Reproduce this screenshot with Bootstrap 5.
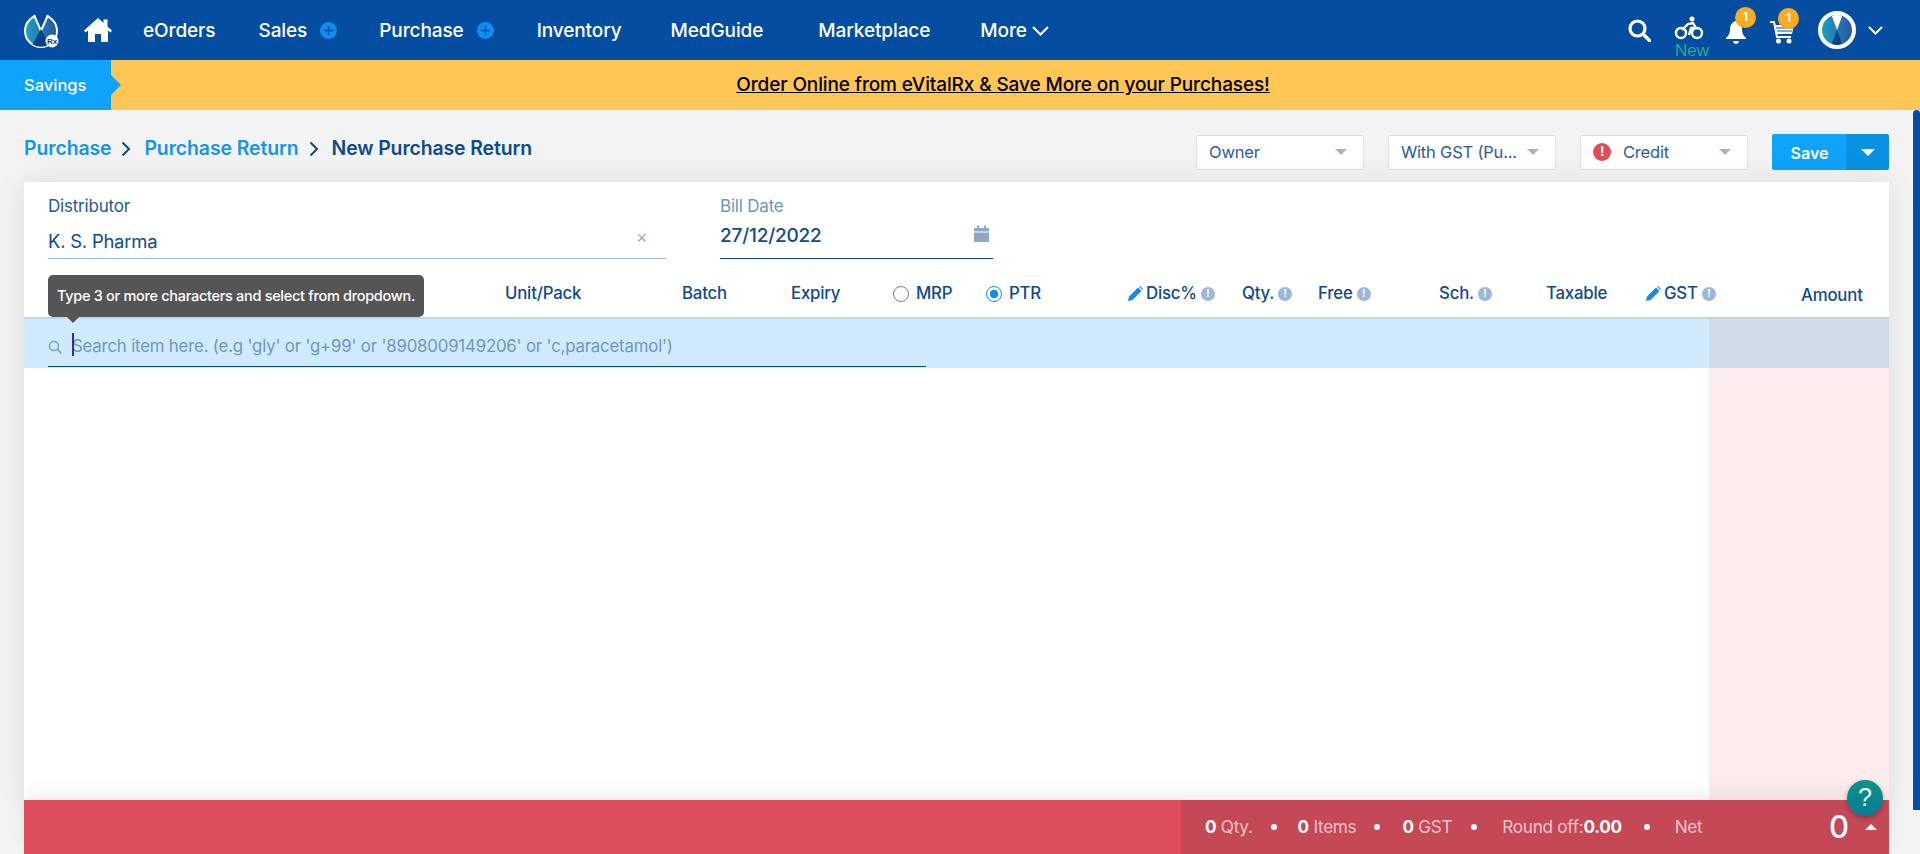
<!DOCTYPE html>
<html lang="en"><head><meta charset="utf-8"><title>New Purchase Return</title>
<link href="https://cdn.jsdelivr.net/npm/bootstrap@5.3.0/dist/css/bootstrap.min.css" rel="stylesheet">
<style>
html,body{height:854px;overflow:hidden}
body{font-family:Inter,"Liberation Sans",sans-serif;background:#f3f3f3;color:#0f4a8c;display:flex;flex-direction:column}
.topbar{height:60px;background:#054da0;color:#fff;padding:0;flex:none;flex-wrap:nowrap;justify-content:flex-start}
.logo-box{margin-left:24px;width:36px;height:36px;margin-right:24px;display:block}
.home-ico{width:28px;height:26px;margin-right:31px}
.nav-txt{font-size:19px;font-weight:500;color:#fff;text-decoration:none;white-space:nowrap;letter-spacing:-.1px;padding-top:2px}
.plus-dot{width:17px;height:17px;border-radius:50%;background:#0f8df0;display:inline-flex;align-items:center;justify-content:center;margin-left:13px}
.ico-slot{position:relative;display:block}
.count-dot{position:absolute;width:21px;height:21px;border-radius:50%;background:#f9ab25;color:#fff;font-size:12px;font-weight:600;display:flex;align-items:center;justify-content:center}
.new-tag{position:absolute;left:1px;right:-5px;top:28px;text-align:center;font-size:17px;line-height:16px;color:#2aa79b;font-family:"Liberation Sans",sans-serif}
.saving-row{height:50px;background:#fec755;flex:none;position:relative;display:flex;align-items:center;justify-content:center}
.saving-tag{position:absolute;left:0;top:0;bottom:0;width:111px;background:#0fa3fb;color:#fff;font-size:16.5px;font-weight:500;display:flex;align-items:center;padding-left:24px}
.saving-tag::after{content:"";position:absolute;left:111px;top:15px;border-left:10px solid #0fa3fb;border-top:10px solid transparent;border-bottom:10px solid transparent}
.saving-link{color:#000;font-size:19px;font-weight:500;text-decoration:underline;letter-spacing:-.12px;padding-left:86px}
.page-wrap{flex:1;min-height:0;display:flex}
.page-col{flex:1;min-width:0;padding:0 24px 0 24px;display:flex;flex-direction:column;width:1889px}
.scroll-thumb{width:7px;background:#054da0;border-radius:4px 4px 0 0;height:700px;flex:none}
.title-row{height:72px;flex:none;position:relative;padding-top:24px}
.crumb-a{font-size:19.4px;font-weight:600;color:#1596e8;white-space:nowrap;letter-spacing:-.08px}
.crumb-b{font-size:19.4px;font-weight:600;color:#0f4a8c;white-space:nowrap;letter-spacing:-.1px}
.crumb-sep{margin:0 13px 0 10px}
.crumb-line{height:29px}
.pick-box{width:168px;height:35px;background:#fff;border:1px solid #dbe1e8;border-radius:3px;font-size:16.5px;color:#2a5c9c;display:flex;align-items:center;padding:0 16px 0 12px;white-space:nowrap;letter-spacing:-.2px}
.tri-down{width:0;height:0;border-top:6px solid #9fb3cb;border-left:6px solid transparent;border-right:6px solid transparent;margin-left:auto;flex:none}
.alert-dot{width:18px;height:18px;border-radius:50%;background:#e04b5a;color:#fff;font-size:13px;font-weight:700;display:inline-flex;align-items:center;justify-content:center;margin-right:12px;flex:none}
.save-main{background:#0fa3fb;color:#fff;font-size:16px;font-weight:600;width:75px;height:36px;padding:1px 0 0;border:0;border-radius:2px 0 0 2px}
.save-caret{background:#0b91e2;width:43px;height:36px;padding:0;border:0;border-radius:0 2px 2px 0;display:flex;align-items:center;justify-content:center}
.save-caret i{display:block;width:0;border-top:7px solid #fff;border-left:7px solid transparent;border-right:7px solid transparent}
.sheet{flex:1;min-height:0;background:#fff;box-shadow:0 0 28px rgba(0,0,0,.09);display:flex;flex-direction:column;position:relative;width:1865px}
.form-row{height:77px;flex:none;padding:14px 24px 0;display:flex;gap:54px}
.f-party{width:618px;height:63px;border-bottom:1px solid #9db7d8;position:relative}
.f-date{width:273px;height:63px;border-bottom:1px solid #0f4a8c;position:relative}
.f-lab{font-size:17px;line-height:20px;color:#1f5a9e;letter-spacing:-.2px}
.f-lab-soft{color:#6f93bf}
.f-val{font-size:18.4px;line-height:24px;color:#0f4a8c;margin-top:13px;letter-spacing:-.2px}
.f-val-date{font-weight:500;margin-top:8px;font-size:19px}
.x-mark{position:absolute;right:19px;top:32px;color:#8ea7c7;font-size:18px;line-height:20px;font-family:"Liberation Sans",sans-serif}
.cal-ico{position:absolute;right:3px;top:29px}
.head-grid{height:60px;flex:none;padding:0 0 0 24px;display:grid;grid-template-columns:457px 177px 109px 102px 93px 142px 114px 76px 121px 107px 100px 155px 64px;align-items:center;font-size:16.8px;font-weight:500;color:#0f4a8c;border-bottom:2px solid #c9d4e0;letter-spacing:-.2px;white-space:nowrap;padding-top:11px}
.head-cell{display:flex;align-items:center}
.amt-cell{padding-top:5px}
.i-dot{width:14px;height:14px;border-radius:50%;background:#9db7d8;color:#fff;font-size:10px;font-weight:700;display:inline-flex;align-items:center;justify-content:center;margin-left:4px}
.pen{margin-right:3px;flex:none}
.rd{width:16px!important;height:16px;margin:0 7px 0 0!important;border:1px solid #6b7d90;flex:none}
.rd:checked{background-color:#fff;background-image:radial-gradient(circle,#0f8df0 0 4px,#fff 4.500px);border-color:#0f8df0}
.search-row{height:49px;flex:none;display:flex}
.search-left{flex:1;background:#cfeafd;padding:0 0 0 24px}
.search-right{width:180px;background:#d0dcea}
.search-line{width:878px;height:48px;border-bottom:1px solid #0a4a7a;display:flex;align-items:center;position:relative;font-size:16.8px;color:#6f96c0;letter-spacing:-.18px;padding-top:8px}
.search-line svg{margin-right:10px;flex:none}
.blink{position:absolute;left:24px;top:14px;width:1.5px;height:23px;background:#3a2c9c}
.body-row{flex:1;display:flex;min-height:0}
.body-left{flex:1}
.body-right{width:180px;background:#fcecec}
.tip-box{position:absolute;left:24px;top:93px;width:376px;height:42px;background:#555;border-radius:5px;color:#fff;font-size:14.500px;font-weight:500;display:flex;align-items:center;justify-content:center;letter-spacing:-.3px;white-space:nowrap;z-index:3}
.tip-box::after{content:"";position:absolute;left:19px;top:42px;border-top:6px solid #555;border-left:6px solid transparent;border-right:6px solid transparent}
.foot-bar{height:54px;flex:none;background:#de4d5c;display:flex;justify-content:flex-end;box-shadow:0 -8px 18px rgba(0,0,0,.06);position:relative;width:1865px}
.foot-sum{width:708px;background:#c54856;display:flex;align-items:center;color:#f5c3c8;font-size:17.2px;position:relative;padding-left:24px;letter-spacing:-.3px;white-space:nowrap}
.foot-sum b{color:#fff;font-weight:700}
.f-dot{width:6px;height:6px;border-radius:50%;background:#fff;flex:none}
.f-total{position:absolute;left:648px;top:9px;color:#fff;font-size:31px;line-height:36px;font-weight:500}
.f-up{position:absolute;left:684px;top:24px;border-bottom:6px solid #fff;border-left:6px solid transparent;border-right:6px solid transparent}
.help-fab{position:absolute;left:1823px;top:-20px;width:36px;height:36px;border-radius:50%;background:linear-gradient(180deg,#0d9488,#05858f 60%,#0a7d9a);color:#fff;font-size:25px;font-weight:400;display:flex;align-items:center;justify-content:center;box-shadow:0 2px 5px rgba(0,0,0,.3);font-family:"Liberation Sans",sans-serif}
.gap-a{margin-left:43px}.gap-b{margin-left:42px}.gap-c{margin-left:43px}.gap-d{margin-left:49px}.gap-e{margin-left:55px}.gap-f{margin-left:50px}
.chev-more{margin-left:5px;margin-top:2px}
.dm-a{margin:0 21px 0 18px}.dm-b{margin:0 22px 0 18px}.dm-c{margin:0 25px 0 19px}.dm-d{margin:0 25px 0 22px}
.ctl-row{width:693px;gap:24px}
.nav-right-bike{width:30px;height:25px;margin-left:23px;margin-top:-6px}
.nav-right-bell{width:20px;height:23px;margin-left:22px}
.nav-right-cart{width:25px;height:23px;margin-left:23px}
.avatar-ico{margin-left:24px}
.chev-end{margin:0 37px 0 12px}
</style></head>
<body>
<nav class="navbar topbar d-flex align-items-center">
  <svg class="logo-box" viewBox="0 0 36 36"><defs><linearGradient id="lg1" x1="0" x2="1"><stop offset="0" stop-color="#1fa3c4"/><stop offset="1" stop-color="#2c4f9e"/></linearGradient></defs>
    <circle cx="17" cy="19" r="16" fill="url(#lg1)" stroke="#fff" stroke-width="2"/>
    <path d="M17 19L10 0H24Z" fill="#054da0"/><path d="M10 3L17 19L24 3" fill="none" stroke="#fff" stroke-width="2"/>
    <path d="M17 17L8.500 32.500Q17 37 25.500 32.500Z" fill="#0a3f8f"/>
    <circle cx="28" cy="29" r="6.500" fill="#fff"/><text x="28" y="32" font-size="8" font-weight="700" text-anchor="middle" fill="#0a3f8f" font-family="Liberation Sans">Rx</text></svg>
  <svg class="home-ico" viewBox="0 0 28 26"><path fill="#fff" d="M14 1L0 13.500 1.500 15.500 4 13.500V25H11V17H17V25H24V13.500L26.500 15.500 28 13.500 23.500 9.500V2.500H19.500V6Z"/></svg>
  <a class="nav-txt" href="#">eOrders</a>
  <a class="nav-txt gap-a" href="#">Sales</a><span class="plus-dot"><svg width="9" height="9" viewBox="0 0 9 9"><path d="M4.500 0V9M0 4.500H9" stroke="#054da0" stroke-width="1.400"/></svg></span>
  <a class="nav-txt gap-b" href="#">Purchase</a><span class="plus-dot"><svg width="9" height="9" viewBox="0 0 9 9"><path d="M4.500 0V9M0 4.500H9" stroke="#054da0" stroke-width="1.400"/></svg></span>
  <a class="nav-txt gap-c" href="#">Inventory</a>
  <a class="nav-txt gap-d" href="#">MedGuide</a>
  <a class="nav-txt gap-e" href="#">Marketplace</a>
  <a class="nav-txt gap-f" href="#">More</a>
  <svg class="chev-more" width="17" height="10" viewBox="0 0 17 10"><path d="M1 1L8.500 8.500 16 1" fill="none" stroke="#fff" stroke-width="2.200"/></svg>
  <div class="ms-auto d-flex align-items-center">
    <svg width="23" height="23" viewBox="0 0 23 23"><circle cx="9.500" cy="9.500" r="7.500" fill="none" stroke="#fff" stroke-width="3.200"/><path d="M15 15L21.500 21.500" stroke="#fff" stroke-width="3.400" stroke-linecap="round"/></svg>
    <span class="ico-slot nav-right-bike"><svg width="30" height="24" viewBox="0 0 30 24"><circle cx="7" cy="17" r="5" fill="none" stroke="#fff" stroke-width="2.400"/><circle cx="23" cy="17" r="5" fill="none" stroke="#fff" stroke-width="2.400"/><circle cx="18" cy="3" r="2.500" fill="#fff"/><path d="M8 14L14 8 19 7 22 12 17 12 15 19" fill="none" stroke="#fff" stroke-width="2.400"/></svg><span class="new-tag">New</span></span>
    <span class="ico-slot nav-right-bell"><svg width="20" height="23" viewBox="0 0 20 23"><path fill="#fff" d="M10 0C6 1 4 4 4 8C4 12 3 14 0 17V18H20V17C17 14 16 12 16 8C16 4 14 1 10 0ZM7 20H13C13 22 11 23 10 23S7 22 7 20Z"/></svg><span class="count-dot" style="left:9px;top:-12px">1</span></span>
    <span class="ico-slot nav-right-cart"><svg width="25" height="23" viewBox="0 0 25 23"><path d="M1 1H5L8 16H22" fill="none" stroke="#fff" stroke-width="2"/><path fill="#fff" d="M6 4H25L23 13H8Z"/><path d="M7 7H24M8 10H23" stroke="#054da0" stroke-width="1"/><circle cx="9.500" cy="20" r="2.500" fill="#fff"/><circle cx="20" cy="20" r="2.500" fill="#fff"/></svg><span class="count-dot" style="left:9px;top:-11px">1</span></span>
    <svg class="avatar-ico" width="38" height="38" viewBox="0 0 38 38"><defs><linearGradient id="lg2" x1="0" x2="1"><stop offset="0" stop-color="#18a6c4"/><stop offset="1" stop-color="#2f4fa0"/></linearGradient><clipPath id="cc"><circle cx="19" cy="19" r="15"/></clipPath></defs><circle cx="19" cy="19" r="17" fill="url(#lg2)" stroke="#fff" stroke-width="4"/><g clip-path="url(#cc)"><path d="M12 0H26L19 19Z" fill="#fff"/><path d="M12 38H26L19 19Z" fill="#0a3f8f"/></g></svg>
    <svg class="chev-end" width="15" height="9" viewBox="0 0 15 9"><path d="M1 1L7.500 7.500 14 1" fill="none" stroke="#fff" stroke-width="2"/></svg>
  </div>
</nav>
<div class="saving-row"><div class="saving-tag">Savings</div><a class="saving-link" href="#">Order Online from eVitalRx &amp; Save More on your Purchases!</a></div>
<div class="page-wrap">
  <div class="page-col">
    <div class="title-row d-flex align-items-start justify-content-between">
      <div class="d-flex align-items-center crumb-line">
        <a class="crumb-a text-decoration-none" href="#">Purchase</a>
        <svg class="crumb-sep" width="10" height="16" viewBox="0 0 10 16"><path d="M1.500 1.500L8 8 1.500 14.500" fill="none" stroke="#0f4a8c" stroke-width="2"/></svg>
        <a class="crumb-a text-decoration-none" href="#">Purchase Return</a>
        <svg class="crumb-sep" width="10" height="16" viewBox="0 0 10 16"><path d="M1.500 1.500L8 8 1.500 14.500" fill="none" stroke="#0f4a8c" stroke-width="2"/></svg>
        <span class="crumb-b">New Purchase Return</span>
      </div>
      <div class="d-flex align-items-center ctl-row">
        <div class="pick-box">Owner<span class="tri-down"></span></div>
        <div class="pick-box">With GST (Pu...<span class="tri-down"></span></div>
        <div class="pick-box"><span class="alert-dot">!</span>Credit<span class="tri-down"></span></div>
        <div class="btn-group"><button class="btn save-main" type="button">Save</button><button class="btn save-caret" type="button" aria-label="More"><i></i></button></div>
      </div>
    </div>
    <div class="sheet">
      <div class="form-row">
        <div class="f-party"><div class="f-lab">Distributor</div><div class="f-val">K. S. Pharma</div><span class="x-mark">×</span></div>
        <div class="f-date"><div class="f-lab f-lab-soft">Bill Date</div><div class="f-val f-val-date">27/12/2022</div>
          <svg class="cal-ico" width="17" height="18" viewBox="0 0 17 18"><path fill="#8ea7c7" d="M1 3H4V0.500H6V3H11V0.500H13V3H16V17H1Z"/><path stroke="#fff" stroke-width="1" d="M1 7H16"/></svg></div>
      </div>
      <div class="head-grid">
        <div class="head-cell"></div>
        <div class="head-cell">Unit/Pack</div>
        <div class="head-cell">Batch</div>
        <div class="head-cell">Expiry</div>
        <label class="head-cell"><input class="form-check-input rd" type="radio" name="pr">MRP</label>
        <label class="head-cell"><input class="form-check-input rd" type="radio" name="pr" checked>PTR</label>
        <div class="head-cell"><svg class="pen" width="15" height="15" viewBox="0 0 15 15"><path fill="#0f8df0" d="M0 15L1 10.500 10 1.500 13.500 5 4.500 14ZM11 .5L12 0 15 3 14.500 4Z"/></svg>Disc%<span class="i-dot">!</span></div>
        <div class="head-cell">Qty.<span class="i-dot">!</span></div>
        <div class="head-cell">Free<span class="i-dot">!</span></div>
        <div class="head-cell">Sch.<span class="i-dot">!</span></div>
        <div class="head-cell">Taxable</div>
        <div class="head-cell"><svg class="pen" width="15" height="15" viewBox="0 0 15 15"><path fill="#0f8df0" d="M0 15L1 10.500 10 1.500 13.500 5 4.500 14ZM11 .5L12 0 15 3 14.500 4Z"/></svg>GST<span class="i-dot">!</span></div>
        <div class="head-cell amt-cell">Amount</div>
      </div>
      <div class="search-row">
        <div class="search-left"><div class="search-line"><svg width="14" height="14" viewBox="0 0 13 13"><circle cx="5.500" cy="5.500" r="4.200" fill="none" stroke="#7fa3c9" stroke-width="1.500"/><path d="M8.500 8.500L12.500 12.500" stroke="#7fa3c9" stroke-width="1.600"/></svg>Search item here. (e.g 'gly' or 'g+99' or '8908009149206' or 'c,paracetamol')<span class="blink"></span></div></div>
        <div class="search-right"></div>
      </div>
      <div class="body-row"><div class="body-left"></div><div class="body-right"></div></div>
      <div class="tip-box">Type 3 or more characters and select from dropdown.</div>
    </div>
    <div class="foot-bar">
      <div class="foot-sum">
        <span><b>0</b> Qty.</span><span class="f-dot dm-a"></span>
        <span><b>0</b> Items</span><span class="f-dot dm-b"></span>
        <span><b>0</b> GST</span><span class="f-dot dm-c"></span>
        <span>Round off:<b>0.00</b></span><span class="f-dot dm-d"></span>
        <span>Net</span>
        <span class="f-total">0</span><span class="f-up"></span>
      </div>
      <div class="help-fab">?</div>
    </div>
  </div>
  <div class="scroll-thumb"></div>
</div>
<script src="https://cdn.jsdelivr.net/npm/bootstrap@5.3.0/dist/js/bootstrap.bundle.min.js"></script>
</body></html>
